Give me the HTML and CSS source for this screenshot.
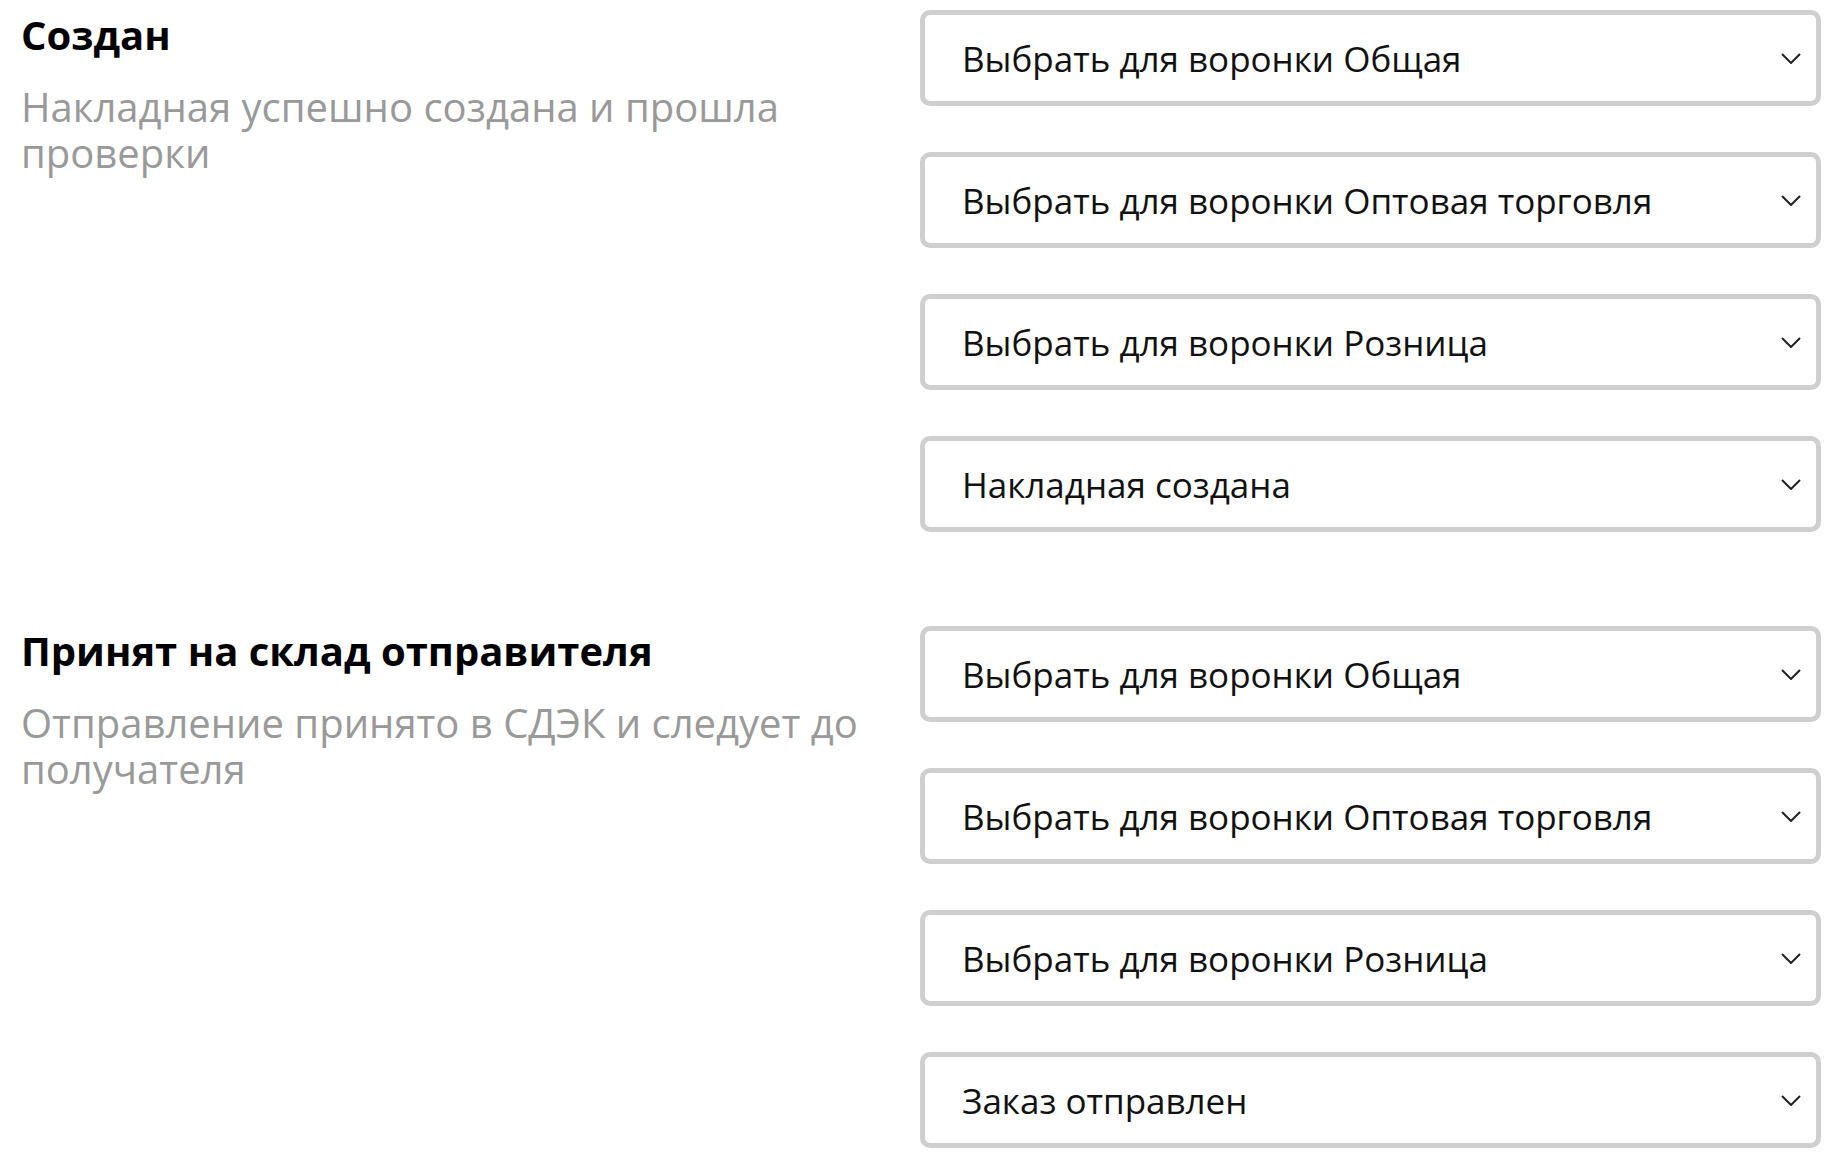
FILE: index.html
```html
<!DOCTYPE html>
<html lang="ru">
<head>
    <meta charset="UTF-8">
    <meta name="viewport" content="width=device-width, initial-scale=1.0">
    <title>Статусы СДЭК</title>
    <link rel="stylesheet" href="styles.css">
</head>
<body>
    <main class="statuses">
        <section class="status">
            <div class="info">
                <h2 class="title">Создан</h2>
                <p class="desc">Накладная успешно создана и прошла проверки</p>
            </div>
            <div class="fields">
                <div class="select"><span>Выбрать для воронки Общая</span><svg class="chevron" viewBox="0 0 20 11"><path d="M1 1l9 9 9-9"/></svg></div>
                <div class="select"><span>Выбрать для воронки Оптовая торговля</span><svg class="chevron" viewBox="0 0 20 11"><path d="M1 1l9 9 9-9"/></svg></div>
                <div class="select"><span>Выбрать для воронки Розница</span><svg class="chevron" viewBox="0 0 20 11"><path d="M1 1l9 9 9-9"/></svg></div>
                <div class="select"><span>Накладная создана</span><svg class="chevron" viewBox="0 0 20 11"><path d="M1 1l9 9 9-9"/></svg></div>
            </div>
        </section>
        <section class="status">
            <div class="info">
                <h2 class="title">Принят на склад отправителя</h2>
                <p class="desc">Отправление принято в СДЭК и следует до получателя</p>
            </div>
            <div class="fields">
                <div class="select"><span>Выбрать для воронки Общая</span><svg class="chevron" viewBox="0 0 20 11"><path d="M1 1l9 9 9-9"/></svg></div>
                <div class="select"><span>Выбрать для воронки Оптовая торговля</span><svg class="chevron" viewBox="0 0 20 11"><path d="M1 1l9 9 9-9"/></svg></div>
                <div class="select"><span>Выбрать для воронки Розница</span><svg class="chevron" viewBox="0 0 20 11"><path d="M1 1l9 9 9-9"/></svg></div>
                <div class="select"><span>Заказ отправлен</span><svg class="chevron" viewBox="0 0 20 11"><path d="M1 1l9 9 9-9"/></svg></div>
            </div>
        </section>
    </main>
</body>
</html>
```

FILE: styles.css
```css
* {
    box-sizing: border-box;
}
html, body {
    margin: 0;
    padding: 0;
    background: #fff;
    font-family: "Open Sans", sans-serif;
}
.statuses {
    padding: 10px 14px 0 21px;
    display: flex;
    flex-direction: column;
    gap: 94px;
}

.status {
    display: grid;
    grid-template-columns: 1fr 901px;
    gap: 30px;
}
.title {
    margin: 0;
    font-size: 40px;
    font-weight: 700;
    line-height: 50px;
    color: #000;
}
.desc {
    margin: 24px 0 0;
    font-size: 40px;
    line-height: 46px;
    color: #999;
}

.fields {
    display: flex;
    flex-direction: column;
    gap: 46px;
}
.select {
    display: flex;
    align-items: center;
    justify-content: space-between;
    height: 96px;
    padding: 0 15px 0 37px;

    border: 5px solid #cfcfcf;
    border-radius: 10px;
    font-size: 35px;
    color: #111;
}
.chevron {
    width: 20px;
    height: 11px;
    fill: none;
    stroke: #222;
    stroke-width: 2;
}
```
